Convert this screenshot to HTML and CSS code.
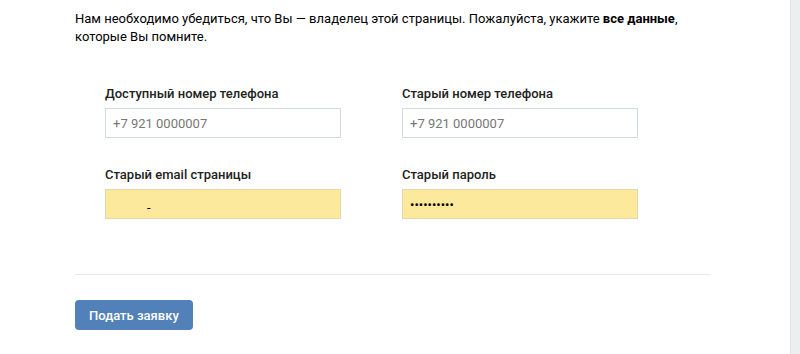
FILE: index.html
```html
<!DOCTYPE html>
<html lang="ru">
<head>
	<meta charset="UTF-8">
	<title>Восстановление доступа</title>
	<link rel="stylesheet" href="styles.css">
</head>
<body>
<div class="page">
	<div class="restore">
		<p class="intro">Нам необходимо убедиться, что Вы — владелец этой страницы. Пожалуйста, укажите <b>все данные</b>, которые Вы помните.</p>
		<div class="fields">
			<div class="field">
				<label>Доступный номер телефона</label>
				<input type="text" placeholder="+7 921 0000007">
			</div>
			<div class="field">
				<label>Старый номер телефона</label>
				<input type="text" placeholder="+7 921 0000007">
			</div>
			<div class="field">
				<label>Старый email страницы</label>
				<input type="text" class="filled email" value="-">
			</div>
			<div class="field">
				<label>Старый пароль</label>
				<input type="password" class="filled" value="0000000000">
			</div>
		</div>
		<hr>
		<button>Подать заявку</button>
	</div>
</div>
<div class="side"></div>
</body>
</html>
```
FILE: styles.css
```css
*{margin:0;
padding:0;
box-sizing:border-box;}
body{
	display:flex;
	height:354px;
	background:#fff;
	font-family:Roboto,"Open Sans","Liberation Sans",sans-serif;
	font-size:13px;
	color:#000;
	overflow:hidden;
}
.page{
	flex:1;
}
.side{
	width:10px;
	background:#edeef0;
	border-left:1px solid #e3e4e8;
}
.restore{
	width:710px;
	padding:10px 0 0 75px;
}
.intro{
	line-height:18px;
	width:630px;
}
.intro b{
	font-weight:700;
}
.fields{
	display:grid;
	grid-template-columns:297px 236px;
	row-gap:28px;
	padding:39px 0 0 30px;
}
.field label{
	display:block;
	font-weight:500;
	color:#222;
	line-height:18px;
	margin-bottom:5px;
}
.field input{
	display:block;
	width:236px;
	height:30px;
	border:1px solid #d3d9de;
	padding:0 7px;
	font-family:Roboto,"Open Sans","Liberation Sans",sans-serif;
	font-size:13px;
	color:#000;
	outline:none;
}
.field input::placeholder{
	color:#777;
}
.field input.filled{
	background:#fde99b;
	border-color:#e0d8b0;
}
.field input.email{
	text-indent:34px;
	padding-top:6px;
}
hr{
	border:0;
	border-top:1px solid #e7e8ec;
	margin-top:55px;
}
button{
	margin-top:25px;
	height:30px;
	padding:0 14px;
	background:#5181b8;
	color:#fff;
	border:0;
	border-radius:4px;
	font-family:Roboto,"Open Sans","Liberation Sans",sans-serif;
	font-size:13px;
	font-weight:500;
}
```
